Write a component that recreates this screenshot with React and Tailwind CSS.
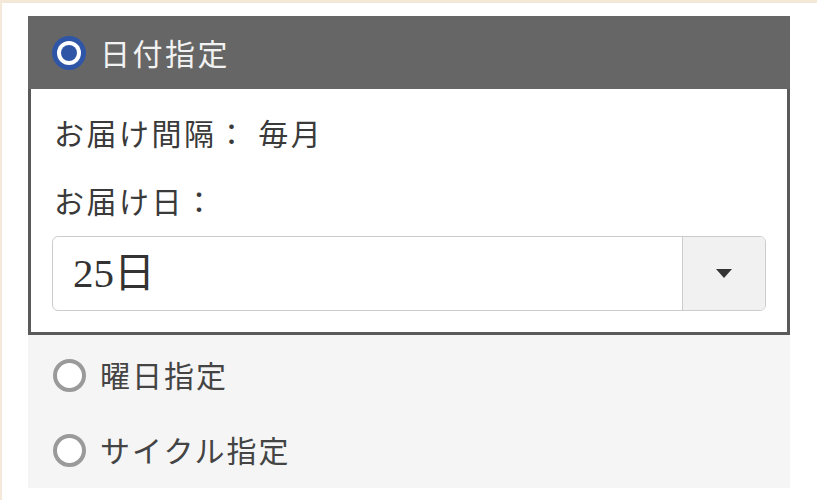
const jp = { fontFamily: '"Noto Sans CJK JP", sans-serif' };

const RadioOn = () => (
  <span className="w-[34px] h-[34px] rounded-full bg-[#2f56a6] flex items-center justify-center shrink-0">
    <span className="w-[24px] h-[24px] rounded-full bg-white flex items-center justify-center">
      <span className="w-[16px] h-[16px] rounded-full bg-[#2f56a6]" />
    </span>
  </span>
);

const RadioOff = () => (
  <span className="w-[33px] h-[33px] rounded-full border-[4px] border-[#9a9a9a] bg-white shrink-0" />
);

const OptionRow = ({ label }) => (
  <div className="h-[75px] flex items-center gap-[14px] pl-[25px]">
    <RadioOff />
    <span className="text-[30px] leading-[36px] tracking-[2px] text-[#444] pb-[4px]">{label}</span>
  </div>
);

export default function App() {
  return (
    <div
      className="w-[817px] h-[500px] bg-white border-t-[3px] border-l-[2px] border-[#f4e9d8] pl-[26px] pt-[13px]"
      style={jp}
    >
      <div className="w-[762px]">
        {/* selected option */}
        <div className="h-[73px] bg-[#666666] flex items-center gap-[14px] pl-[24px]">
          <RadioOn />
          <span className="text-[30px] leading-[36px] tracking-[2.5px] text-[#f2f2f2] pb-[2px]">日付指定</span>
        </div>
        <div className="border-[3px] border-t-0 border-[#5a5a5a] bg-white px-[21px] pt-[25px] pb-[21px]">
          <p className="text-[30px] leading-[36px] tracking-[2.5px] text-[#3a3a3a] pl-[2px]">
            お届け間隔： 毎月
          </p>
          <p className="mt-[32px] text-[30px] leading-[36px] tracking-[2.5px] text-[#3a3a3a] pl-[2px]">
            お届け日：
          </p>
          <div className="mt-[18px] h-[75px] flex border border-[#cccccc] rounded-[6px] overflow-hidden">
            <div
              className="flex-1 flex items-center pl-[20px] text-[41px] text-[#333]"
              style={{ fontFamily: '"Liberation Serif", "Noto Sans CJK JP", serif' }}
            >
              25日
            </div>
            <div className="w-[83px] bg-[#f1f1f1] border-l border-[#cccccc] flex items-center justify-center">
              <span className="w-0 h-0 border-l-[8px] border-r-[8px] border-t-[9px] border-l-transparent border-r-transparent border-t-[#333]" />
            </div>
          </div>
        </div>
        {/* other options */}
        <div className="bg-[#f5f5f5] pt-[3px]">
          <OptionRow label="曜日指定" />
          <OptionRow label="サイクル指定" />
        </div>
      </div>
    </div>
  );
}
